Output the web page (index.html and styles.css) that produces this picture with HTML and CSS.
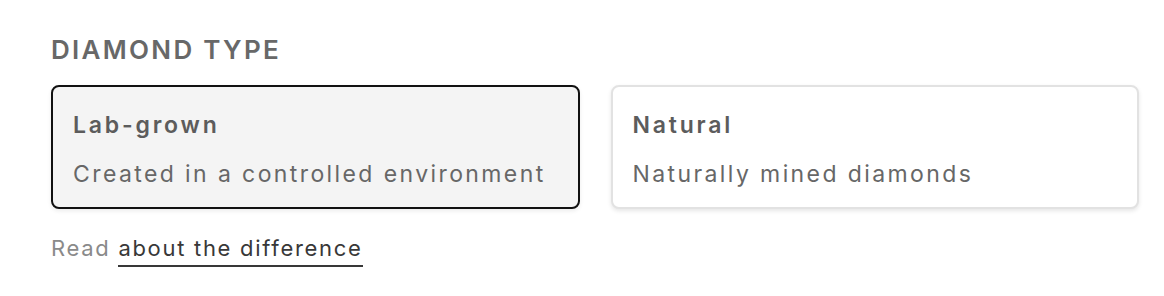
FILE: index.html
```html
<!DOCTYPE html>
<html lang="en">
<head>
<meta charset="utf-8">
<title>Diamond type</title>
<link rel="stylesheet" href="styles.css">
</head>
<body>
<section class="picker">
  <h2 class="picker-title">DIAMOND TYPE</h2>
  <div class="options">
    <button class="option option-selected" type="button">
      <span class="option-name">Lab-grown</span>
      <span class="option-desc">Created in a controlled environment</span>
    </button>
    <button class="option" type="button">
      <span class="option-name">Natural</span>
      <span class="option-desc">Naturally mined diamonds</span>
    </button>
  </div>
  <p class="note">Read <a class="note-link" href="#">about the difference</a></p>
</section>
</body>
</html>
```

FILE: styles.css
```css
html, body {
  margin: 0;
  padding: 0;
  background: #ffffff;
}

body {
  font-family: "Inter", "Lato", "DejaVu Sans", sans-serif;
}

.picker {
  padding: 34px 0 0 51px;
  width: 1088px;
}

.picker-title {
  margin: 0;
  font-size: 26px;
  line-height: 32px;
  font-weight: 600;
  color: #686868;
  letter-spacing: 2.3px;
}

.options {
  margin-top: 19px;
  display: grid;
  grid-template-columns: 1fr 1fr;
  column-gap: 31px;
}

.option {
  display: flex;
  flex-direction: column;
  align-items: flex-start;
  text-align: left;
  font-family: inherit;
  padding: 24px 20px 19px 20px;
  border-radius: 8px;
  border: 2px solid #e2e2e2;
  background: #ffffff;
  box-shadow: 0 2px 4px rgba(0, 0, 0, 0.10);
  cursor: pointer;
}

.option-selected {
  border-color: #111111;
  background: #f4f4f4;
  box-shadow: 0 2px 4px rgba(0, 0, 0, 0.08);
}

.option-name {
  font-size: 23px;
  line-height: 28px;
  font-weight: 600;
  color: #5c5c5c;
  letter-spacing: 2.8px;
}

.option-desc {
  margin-top: 21px;
  font-size: 23px;
  line-height: 28px;
  font-weight: 400;
  color: #676767;
  letter-spacing: 2.4px;
}

.note {
  margin: 25px 0 0 0;
  font-size: 22px;
  line-height: 28px;
  color: #8a8a8a;
  letter-spacing: 1.7px;
}

.note-link {
  display: inline-block;
  color: #383838;
  text-decoration: none;
  padding-bottom: 3px;
  border-bottom: 2px solid #383838;
}
```
